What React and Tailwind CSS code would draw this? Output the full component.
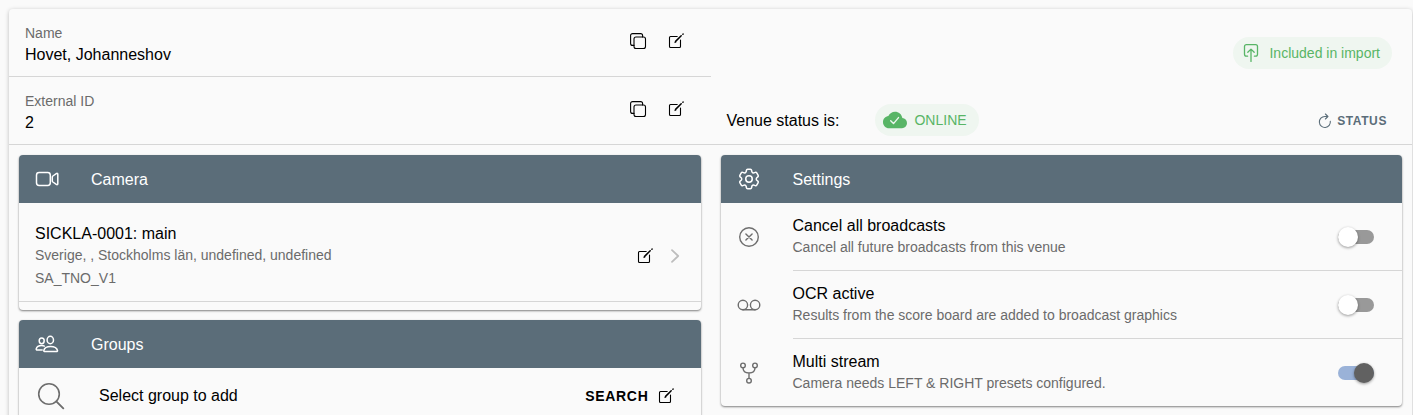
import { useState } from 'react';
import { HiOutlineCog6Tooth } from 'react-icons/hi2';

function Icon({ size = 24, width = 1.4, className = '', children }) {
  return (
    <svg
      width={size}
      height={size}
      viewBox={`0 0 ${size} ${size}`}
      fill="none"
      stroke="currentColor"
      strokeWidth={width}
      strokeLinecap="round"
      strokeLinejoin="round"
      aria-hidden="true"
      className={`shrink-0 ${className}`}
    >
      {children}
    </svg>
  );
}

const CopyIcon = () => (
  <Icon size={18} width={1.1}>
    <rect x="5" y="5" width="11.5" height="11.5" rx="2" />
    <path d="M5 13.4H3.6a2 2 0 0 1-2-2V3.6a2 2 0 0 1 2-2h8a2 2 0 0 1 2 2V5" />
  </Icon>
);

const EditIcon = () => (
  <Icon size={18} width={1.1}>
    <path d="M10.2 4.5H3.5a1 1 0 0 0-1 1v9a1 1 0 0 0 1 1h9a1 1 0 0 0 1-1V8" />
    <path d="M8.6 9.4 14.2 3.8" strokeWidth="1.5" />
    <path d="M15.9 2.2 16.1 2" strokeWidth="1.5" />
    <path d="m7.9 10.2.4-.8.5.5z" strokeWidth="0.8" />
  </Icon>
);

const VideoIcon = () => (
  <Icon width={1.5}>
    <rect x="1.5" y="5.6" width="13.8" height="12.8" rx="2.6" />
    <path d="m17.9 9 3.4-2.4c.8-.5 1.5-.2 1.5.7v9.4c0 .9-.7 1.2-1.5.7L17.9 15c-.4-.3-.6-.6-.6-1.1v-3.8c0-.5.2-.8.6-1.1z" />
  </Icon>
);

const PeopleIcon = () => (
  <Icon width={1.5}>
    <ellipse cx="15.3" cy="8" rx="3.2" ry="3.7" />
    <path d="M9.8 19.6c-.7 0-1.1-.5-1-1.1.5-2.3 3-4 6.8-4s6.3 1.7 6.9 4c.1.6-.3 1.1-1 1.1z" />
    <ellipse cx="6.7" cy="8.8" rx="2.5" ry="2.9" />
    <path d="M7.2 18H2.1c-.6 0-1-.5-.9-1 .5-2 2.5-3.4 5.5-3.4 1.1 0 2 .2 2.8.5" />
  </Icon>
);

const CancelIcon = () => (
  <Icon>
    <circle cx="12" cy="12" r="9.3" />
    <path d="m8.9 8.9 6.2 6.2M15.1 8.9l-6.2 6.2" />
  </Icon>
);

const TapeIcon = () => (
  <Icon>
    <circle cx="5.9" cy="12" r="4.7" />
    <circle cx="18.1" cy="12" r="4.7" />
    <path d="M5.9 16.7h12.2" />
  </Icon>
);

const ForkIcon = () => (
  <Icon>
    <circle cx="6" cy="4.4" r="2.3" />
    <circle cx="18" cy="4.4" r="2.3" />
    <circle cx="12" cy="19.7" r="2.3" />
    <path d="M6 6.8c0 3.6 1.8 5.2 6 5.2s6-1.6 6-5.2M12 12v5.3" />
  </Icon>
);

const SearchIcon = () => (
  <Icon size={28} width={1.6}>
    <circle cx="12" cy="12" r="10.3" />
    <path d="m19.3 19.3 7 7" strokeWidth="1.9" />
  </Icon>
);

const ChevronIcon = () => (
  <Icon size={18} width={1.8} className="text-[#bdbdbd]">
    <path d="m6 3.2 6.2 5.8L6 14.8" />
  </Icon>
);

const ImportIcon = () => (
  <Icon size={20} width={1.3}>
    <path d="M6.6 13.2H5.4a1.9 1.9 0 0 1-1.9-1.9V3.6a1.9 1.9 0 0 1 1.9-1.9h9.2a1.9 1.9 0 0 1 1.9 1.9v7.7a1.9 1.9 0 0 1-1.9 1.9h-1.2" />
    <path d="M10 18.4V6.2M6.8 9.3 10 6.1l3.2 3.2" />
  </Icon>
);

const CloudDoneIcon = () => (
  <svg width="24" height="24" viewBox="0 0 24 24" aria-hidden="true" className="shrink-0">
    <path
      fill="currentColor"
      d="M19.35 10.04C18.67 6.3 15.64 3.8 12 3.8 9.11 3.8 6.6 5.64 5.35 8.04 2.34 8.36 0 10.91 0 14.2c0 3.31 2.69 6 6 6h13c2.76 0 5-2.44 5-5.2 0-2.64-2.05-4.78-4.65-4.96z"
    />
    <path d="m7.7 12.8 2.8 2.8 5-6" fill="none" stroke="#eff6f0" strokeWidth="1.4" strokeLinecap="round" strokeLinejoin="round" />
  </svg>
);

const RefreshIcon = () => (
  <Icon size={16} width={1.1}>
    <path d="M13.3 8.2A5.5 5.5 0 1 1 7.8 3.5h2.8" />
    <path d="M8.4 1 10.9 3.5 8.4 6" />
  </Icon>
);

function IconButton({ label, children }) {
  return (
    <button type="button" aria-label={label} className="cursor-pointer">
      {children}
    </button>
  );
}

function Field({ label, value, divider }) {
  return (
    <div className={`flex h-17 items-start pt-3.5 pl-4 pr-[26px] ${divider ? 'border-b border-[#d6d6d6]' : ''}`}>
      <dl className="grow">
        <dt className="text-sm/5 text-[#6b6b6b]">{label}</dt>
        <dd className="text-base/6">{value}</dd>
      </dl>
      <div className="flex gap-5 pt-[9px]">
        <IconButton label={`Copy ${label}`}>
          <CopyIcon />
        </IconButton>
        <IconButton label={`Edit ${label}`}>
          <EditIcon />
        </IconButton>
      </div>
    </div>
  );
}

function Card({ icon, title, children }) {
  return (
    <section className="overflow-hidden rounded-[4px] bg-[#fafafa] shadow-[0_1px_2px_rgba(0,0,0,0.42),0_1px_3px_rgba(0,0,0,0.1)]">
      <header className="flex h-12 items-center bg-[#5b6d79] pl-4 text-white">
        <span className="flex w-14 items-center">{icon}</span>
        <h2 className="pt-0.5 text-base">{title}</h2>
      </header>
      {children}
    </section>
  );
}

function SettingRow({ id, icon, title, text, on, last }) {
  const [checked, setChecked] = useState(on);
  return (
    <li className="flex">
      <span className="flex w-[72px] shrink-0 items-center pl-4 text-[#6e6e6e]">{icon}</span>
      <div className={`flex grow items-center pt-3 pb-[13px] pr-7 ${last ? '' : 'border-b border-[#d6d6d6]'}`}>
        <label htmlFor={id} className="grow">
          <span className="block text-base/[22px]">{title}</span>
          <span className="block text-sm/5 text-[#6b6b6b]">{text}</span>
        </label>
        <input
          id={id}
          type="checkbox"
          role="switch"
          checked={checked}
          onChange={(e) => setChecked(e.target.checked)}
          className="mt-0.5 flex h-3.5 w-9 shrink-0 cursor-pointer appearance-none items-center rounded-full bg-[#999999] before:size-5 before:shrink-0 before:rounded-full before:bg-white before:shadow-[0_1px_3px_rgba(0,0,0,0.4)] checked:justify-end checked:bg-[#9ab2d8] checked:before:bg-[#616161]"
        />
      </div>
    </li>
  );
}

export default function App() {
  return (
    <div className="h-screen overflow-hidden bg-[#fafafa] pt-[9px] pr-px pl-[9px] font-['Liberation_Sans',Arial,sans-serif] text-black">
      <main className="min-h-full rounded-[4px] bg-[#fafafa] shadow-[0_1px_4px_rgba(0,0,0,0.25)]">
        <div className="grid grid-cols-2 border-b border-[#d6d6d6]">
          <div className="-mb-px">
            <Field label="Name" value="Hovet, Johanneshov" divider />
            <Field label="External ID" value="2" />
          </div>
          <div className="flex flex-col">
            <div className="flex grow items-center justify-end pr-5">
              <span className="flex h-8 items-center gap-2 rounded-full bg-[#eff6f0] px-3 pl-2 text-sm text-[#58b566]">
                <ImportIcon />
                Included in import
              </span>
            </div>
            <div className="flex h-12 items-center pr-[25px] pl-4">
              <span className="pt-0.5 text-base">Venue status is:</span>
              <span className="ml-9 flex h-8 items-center gap-[7px] rounded-full bg-[#eff6f0] pr-3 pl-2 text-sm text-[#58b566]">
                <CloudDoneIcon />
                ONLINE
              </span>
              <button type="button" className="ml-auto flex cursor-pointer items-center gap-1 pt-0.5 text-xs font-bold tracking-wider text-[#5b6d79]">
                <RefreshIcon />
                STATUS
              </button>
            </div>
          </div>
        </div>

        <div className="grid grid-cols-2 items-start">
          <div className="flex flex-col gap-2.5 p-2.5">
            <Card icon={<VideoIcon />} title="Camera">
              <div className="pb-2">
                <div className="flex items-center border-b border-[#d6d6d6] pt-5 pr-[17px] pb-[13px] pl-4">
                  <div className="grow">
                    <h3 className="text-base/[22px]">SICKLA-0001: main</h3>
                    <p className="text-sm/5 text-[#6b6b6b]">Sverige, , Stockholms län, undefined, undefined</p>
                    <p className="mt-[3px] text-sm/5 text-[#6b6b6b]">SA_TNO_V1</p>
                  </div>
                  <div className="flex gap-3">
                    <IconButton label="Edit camera">
                      <EditIcon />
                    </IconButton>
                    <IconButton label="Open camera">
                      <ChevronIcon />
                    </IconButton>
                  </div>
                </div>
              </div>
            </Card>
            <Card icon={<PeopleIcon />} title="Groups">
              <div className="flex h-14 items-center pr-[26px] pl-[18px]">
                <span className="flex w-[62px] text-[#6e6e6e]">
                  <SearchIcon />
                </span>
                <span className="grow text-base">Select group to add</span>
                <button type="button" className="flex cursor-pointer items-center gap-2 text-sm font-bold tracking-wider">
                  SEARCH
                  <EditIcon />
                </button>
              </div>
            </Card>
          </div>
          <div className="p-2.5">
            <Card icon={<HiOutlineCog6Tooth size={26} strokeWidth={1.4} className="-ml-px" aria-hidden="true" />} title="Settings">
              <ul>
                <SettingRow id="cancel" icon={<CancelIcon />} title="Cancel all broadcasts" text="Cancel all future broadcasts from this venue" on={false} />
                <SettingRow id="ocr" icon={<TapeIcon />} title="OCR active" text="Results from the score board are added to broadcast graphics" on={false} />
                <SettingRow id="multi" icon={<ForkIcon />} title="Multi stream" text="Camera needs LEFT & RIGHT presets configured." on last />
              </ul>
            </Card>
          </div>
        </div>
      </main>
    </div>
  );
}
